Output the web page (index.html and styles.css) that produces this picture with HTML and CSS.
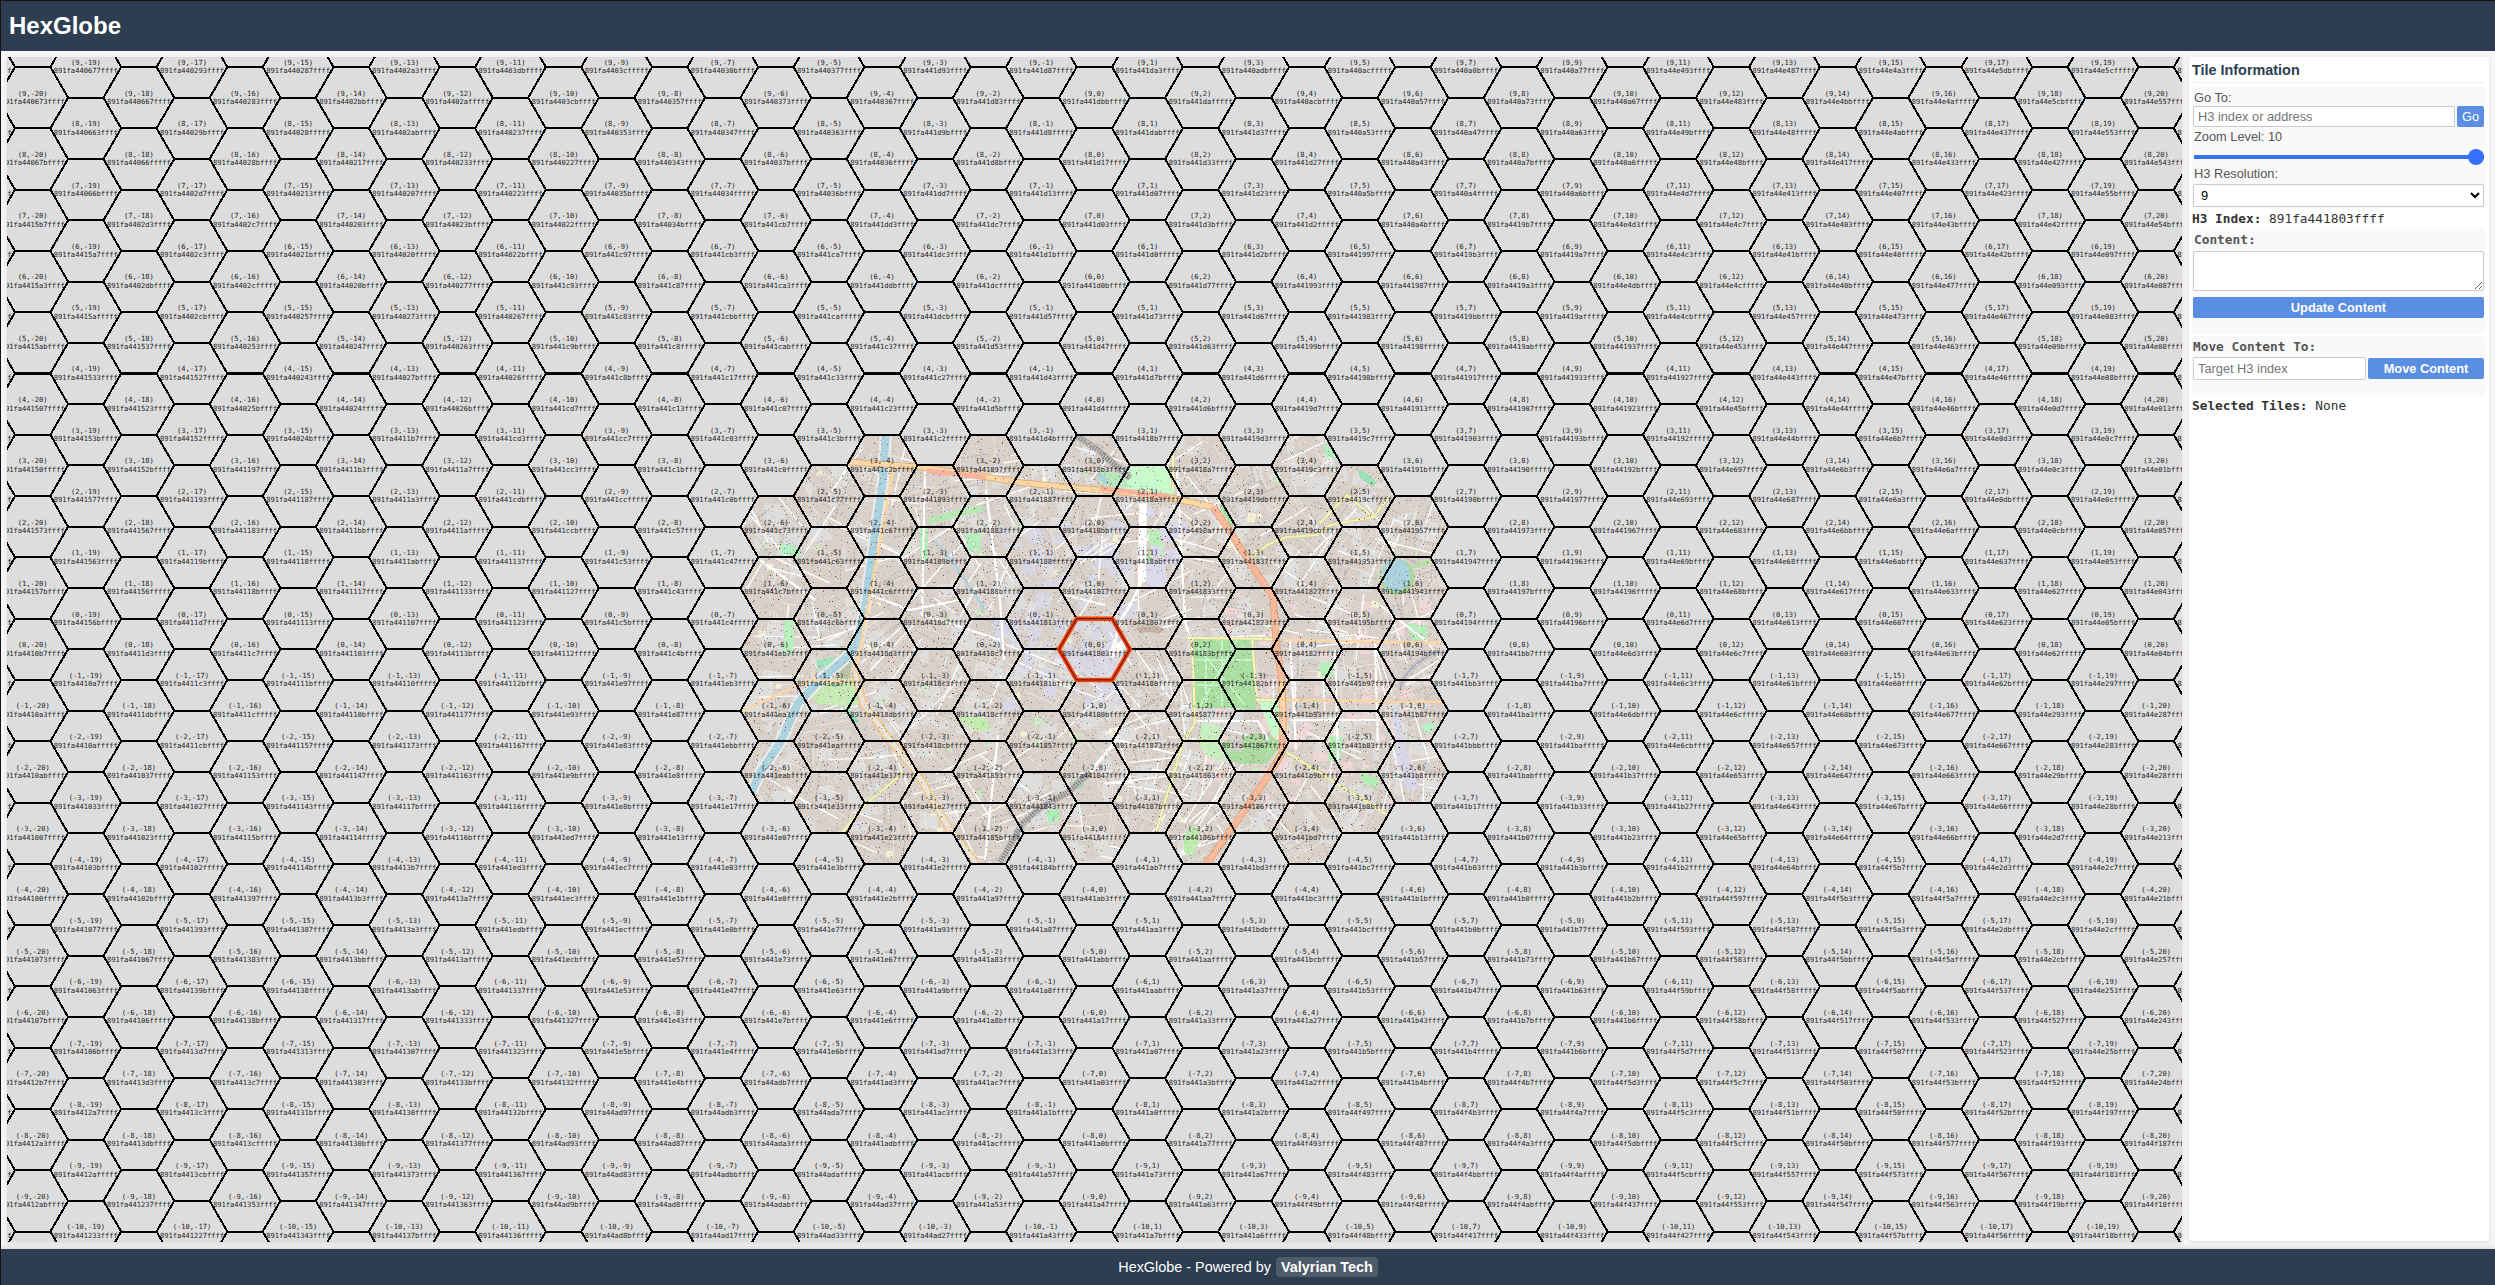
FILE: index.html
```html
<!DOCTYPE html>
<html lang="en">
<head>
<meta charset="utf-8">
<title>HexGlobe</title>
<link rel="stylesheet" href="styles.css">
</head>
<body>
<div class="app">
  <header class="app-header"><h1>HexGlobe</h1></header>
  <main class="app-main">
    <svg class="hex-map" id="map" viewBox="7 57 2175 1185"></svg>
    <aside class="panel">
      <h2>Tile Information</h2>
      <section class="group nav">
        <label for="goto">Go To:</label>
        <div class="row">
          <input id="goto" type="text" placeholder="H3 index or address">
          <button class="btn go">Go</button>
        </div>
        <label for="zoom">Zoom Level: 10</label>
        <input id="zoom" class="slider" type="range" min="1" max="10" value="10">
        <label for="res">H3 Resolution:</label>
        <select id="res"><option>9</option></select>
      </section>
      <p class="info"><strong>H3 Index:</strong> 891fa441803ffff</p>
      <section class="group content">
        <label class="mono" for="content">Content:</label>
        <textarea id="content"></textarea>
        <button class="btn wide">Update Content</button>
      </section>
      <section class="group move">
        <label class="mono" for="target">Move Content To:</label>
        <div class="row">
          <input id="target" type="text" placeholder="Target H3 index">
          <button class="btn move-btn">Move Content</button>
        </div>
      </section>
      <p class="info selected"><strong>Selected Tiles:</strong> None</p>
    </aside>
  </main>
  <footer class="app-footer">HexGlobe - Powered by <a class="brand">Valyrian Tech</a></footer>
</div>
<script src="map.js"></script>
</body>
</html>
```
FILE: styles.css
```css
* { box-sizing: border-box; }
body {
  margin: 0;
  height: 1285px;
  overflow: hidden;
  background: #f5f5f5;
  color: #333;
  font-family: "Liberation Sans", Arial, sans-serif;
}
.app {
  display: flex;
  flex-direction: column;
  height: 1285px;
  border-top: 1px solid #151515;
  border-left: 1px solid #151515;
}
.app-header {
  height: 50px;
  flex: none;
  display: flex;
  align-items: center;
  padding-left: 8px;
  background: #2c3e50;
  color: #fff;
}
.app-header h1 { margin: 0; font-size: 24px; line-height: 28px; }
.app-main {
  flex: 1;
  min-height: 0;
  display: flex;
  gap: 7px;
  padding: 6px 6px 7px;
}
.hex-map {
  width: 2175px;
  height: 1185px;
  flex: none;
  background: #ddd;
  box-shadow: 0 2px 4px rgba(0, 0, 0, .1);
}
.edge { fill: none; stroke: #000; stroke-width: 2; shape-rendering: crispEdges; }
.active-halo { fill: none; stroke: #f4430f; stroke-width: 4.5; }
.active-core { fill: none; stroke: #6b1c00; stroke-width: 1.2; }
.tile-label {
  font: 7.08px "DejaVu Sans Mono", monospace;
  fill: #222;
}
.panel {
  width: 300px;
  height: 1184px;
  padding: 3px 4px 3px 3px;
  background: #fff;
  border-radius: 4px;
  box-shadow: 0 1px 3px rgba(0, 0, 0, .12);
}
.panel h2 {
  margin: 0 0 4px;
  height: 23px;
  border-bottom: 1px solid #eee;
  font-size: 14.4px;
  line-height: 20px;
  color: #2c3e50;
}
.group {
  display: flex;
  flex-direction: column;
  padding: 0 1px 0 1px;
  border-radius: 3px;
  background: #f9f9f9;
}
.group label { padding-left: 1px; font-size: 12.8px; line-height: 15px; color: #555; }
.group .mono, .info { font-family: "DejaVu Sans Mono", monospace; }
.group .mono { font-weight: bold; }
.row { display: flex; gap: 2px; }
.nav { height: 121px; padding-top: 3px; }
.nav .row { margin: 1px 0 2px; }
input[type=text], select, textarea {
  margin: 0;
  border: 1px solid #ccc;
  border-radius: 2px;
  background: #fff;
  font: 12.8px "Liberation Sans", Arial, sans-serif;
}
input[type=text] { flex: 1; min-width: 0; height: 21px; padding: 0 4px; }
.btn {
  height: 21px;
  padding: 0;
  border: 0;
  border-radius: 2px;
  background: #5a8ee2;
  color: #fff;
  font: bold 12.8px "Liberation Sans", Arial, sans-serif;
}
.btn.go { width: 27px; font-weight: normal; }
.slider {
  appearance: none;
  width: 290px;
  height: 16px;
  margin: 5px 0 1px 1px;
  background: linear-gradient(#3670f5, #3670f5) center / 100% 4px no-repeat;
}
.slider::-webkit-slider-thumb {
  appearance: none;
  width: 16px;
  height: 16px;
  border-radius: 50%;
  background: #376fff;
}
.nav select { height: 23px; margin-top: 3px; padding: 0 3px; font-size: 12.8px; }
.info { margin: 0; height: 20px; font-size: 12.8px; line-height: 22px; }
.content { height: 106px; padding-top: 4px; margin-bottom: 2px; }
.content textarea { height: 40px; margin: 4px 0 6px; resize: vertical; }
.move { height: 59px; padding-top: 3px; }
.move label { padding-left: 0; }
.move .row { align-items: center; margin-top: 3px; }
.move input[type=text] { height: 23px; }
.move-btn { width: 116px; }
.selected { line-height: 21px; }
.app-footer {
  height: 36px;
  flex: none;
  display: flex;
  justify-content: center;
  align-items: center;
  gap: 5px;
  background: #2c3e50;
  color: #fff;
  font-size: 14.4px;
  box-shadow: 0 -2px 4px rgba(0, 0, 0, .1);
}
.brand {
  padding: 2px 5px;
  border-radius: 4px;
  background: #4d5b6a;
  font-weight: bold;
  line-height: 16px;
}
```
FILE: map.js
```js
// Tile codes, each drawn as 891fa44 + code + ffff. Two lists per row, 9 down to -10:
// odd columns (-19..19), then even columns (-20..20).
const rows = `
0677 0293 0287 02a3 03db 03cf 030b 0377 1d93 1d87 1da3 0adb 0acf 0a0b 0a77 e493 e487 e4a3 e5db e5cf
0673 0667 0283 02bb 02af 03cb 0357 0373 0367 1d83 1dbb 1daf 0acb 0a57 0a73 0a67 e483 e4bb e4af e5cb e557
0663 029b 028f 02ab 0237 0353 0347 0363 1d9b 1d8f 1dab 1d37 0a53 0a47 0a63 e49b e48f e4ab e437 e553
067b 066f 028b 0217 0233 0227 0343 037b 036f 1d8b 1d17 1d33 1d27 0a43 0a7b 0a6f e48b e417 e433 e427 e543
066b 02d7 0213 0207 0223 035b 034f 036b 1dd7 1d13 1d07 1d23 0a5b 0a4f 0a6b e4d7 e413 e407 e423 e55b
15b7 02d3 02c7 0203 023b 022f 034b 1cb7 1dd3 1dc7 1d03 1d3b 1d2f 0a4b 19b7 e4d3 e4c7 e403 e43b e42f e54b
15a7 02c3 021b 020f 022b 1c97 1cb3 1ca7 1dc3 1d1b 1d0f 1d2b 1997 19b3 19a7 e4c3 e41b e40f e42b e097
15a3 02db 02cf 020b 0277 1c93 1c87 1ca3 1ddb 1dcf 1d0b 1d77 1993 1987 19a3 e4db e4cf e40b e477 e093 e087
15af 02cb 0257 0273 0267 1c83 1cbb 1caf 1dcb 1d57 1d73 1d67 1983 19bb 19af e4cb e457 e473 e467 e083
15ab 1537 0253 0247 0263 1c9b 1c8f 1cab 1c37 1d53 1d47 1d63 199b 198f 19ab 1937 e453 e447 e463 e09b e08f
1533 1527 0243 027b 026f 1c8b 1c17 1c33 1c27 1d43 1d7b 1d6f 198b 1917 1933 1927 e443 e47b e46f e08b
1507 1523 025b 024f 026b 1cd7 1c13 1c07 1c23 1d5b 1d4f 1d6b 19d7 1913 1907 1923 e45b e44f e46b e0d7 e013
153b 152f 024b 11b7 1cd3 1cc7 1c03 1c3b 1c2f 1d4b 18b7 19d3 19c7 1903 193b 192f e44b e6b7 e0d3 e0c7
150f 152b 1197 11b3 11a7 1cc3 1c1b 1c0f 1c2b 1897 18b3 18a7 19c3 191b 190f 192b e697 e6b3 e6a7 e0c3 e01b
1577 1193 1187 11a3 1cdb 1ccf 1c0b 1c77 1893 1887 18a3 19db 19cf 190b 1977 e693 e687 e6a3 e0db e0cf
1573 1567 1183 11bb 11af 1ccb 1c57 1c73 1c67 1883 18bb 18af 19cb 1957 1973 1967 e683 e6bb e6af e0cb e057
1563 119b 118f 11ab 1137 1c53 1c47 1c63 189b 188f 18ab 1837 1953 1947 1963 e69b e68f e6ab e637 e053
157b 156f 118b 1117 1133 1127 1c43 1c7b 1c6f 188b 1817 1833 1827 1943 197b 196f e68b e617 e633 e627 e043
156b 11d7 1113 1107 1123 1c5b 1c4f 1c6b 18d7 1813 1807 1823 195b 194f 196b e6d7 e613 e607 e623 e05b
10b7 11d3 11c7 1103 113b 112f 1c4b 1eb7 18d3 18c7 1803 183b 182f 194b 1bb7 e6d3 e6c7 e603 e63b e62f e04b
10a7 11c3 111b 110f 112b 1e97 1eb3 1ea7 18c3 181b 180f 182b 1b97 1bb3 1ba7 e6c3 e61b e60f e62b e297
10a3 11db 11cf 110b 1177 1e93 1e87 1ea3 18db 18cf 180b 1877 1b93 1b87 1ba3 e6db e6cf e60b e677 e293 e287
10af 11cb 1157 1173 1167 1e83 1ebb 1eaf 18cb 1857 1873 1867 1b83 1bbb 1baf e6cb e657 e673 e667 e283
10ab 1037 1153 1147 1163 1e9b 1e8f 1eab 1e37 1853 1847 1863 1b9b 1b8f 1bab 1b37 e653 e647 e663 e29b e28f
1033 1027 1143 117b 116f 1e8b 1e17 1e33 1e27 1843 187b 186f 1b8b 1b17 1b33 1b27 e643 e67b e66f e28b
1007 1023 115b 114f 116b 1ed7 1e13 1e07 1e23 185b 184f 186b 1bd7 1b13 1b07 1b23 e65b e64f e66b e2d7 e213
103b 102f 114b 13b7 1ed3 1ec7 1e03 1e3b 1e2f 184b 1ab7 1bd3 1bc7 1b03 1b3b 1b2f e64b f5b7 e2d3 e2c7
100f 102b 1397 13b3 13a7 1ec3 1e1b 1e0f 1e2b 1a97 1ab3 1aa7 1bc3 1b1b 1b0f 1b2b f597 f5b3 f5a7 e2c3 e21b
1077 1393 1387 13a3 1edb 1ecf 1e0b 1e77 1a93 1a87 1aa3 1bdb 1bcf 1b0b 1b77 f593 f587 f5a3 e2db e2cf
1073 1067 1383 13bb 13af 1ecb 1e57 1e73 1e67 1a83 1abb 1aaf 1bcb 1b57 1b73 1b67 f583 f5bb f5af e2cb e257
1063 139b 138f 13ab 1337 1e53 1e47 1e63 1a9b 1a8f 1aab 1a37 1b53 1b47 1b63 f59b f58f f5ab f537 e253
107b 106f 138b 1317 1333 1327 1e43 1e7b 1e6f 1a8b 1a17 1a33 1a27 1b43 1b7b 1b6f f58b f517 f533 f527 e243
106b 13d7 1313 1307 1323 1e5b 1e4f 1e6b 1ad7 1a13 1a07 1a23 1b5b 1b4f 1b6b f5d7 f513 f507 f523 e25b
12b7 13d3 13c7 1303 133b 132f 1e4b adb7 1ad3 1ac7 1a03 1a3b 1a2f 1b4b f4b7 f5d3 f5c7 f503 f53b f52f e24b
12a7 13c3 131b 130f 132b ad97 adb3 ada7 1ac3 1a1b 1a0f 1a2b f497 f4b3 f4a7 f5c3 f51b f50f f52b f197
12a3 13db 13cf 130b 1377 ad93 ad87 ada3 1adb 1acf 1a0b 1a77 f493 f487 f4a3 f5db f5cf f50b f577 f193 f187
12af 13cb 1357 1373 1367 ad83 adbb adaf 1acb 1a57 1a73 1a67 f483 f4bb f4af f5cb f557 f573 f567 f183
12ab 1237 1353 1347 1363 ad9b ad8f adab ad37 1a53 1a47 1a63 f49b f48f f4ab f437 f553 f547 f563 f19b f18f
1233 1227 1343 137b 136f ad8b ad17 ad33 ad27 1a43 1a7b 1a6f f48b f417 f433 f427 f543 f57b f56f f18b
`.trim().split('\n').map(line => line.split(' '));

const R = 35.39, COL = 53.085, ROW = 61.29, X0 = 1094.4, Y0 = 649.3;
const cx = c => X0 + c * COL;
const cy = (r, c) => Y0 - r * ROW - (c % 2 ? ROW / 2 : 0);
const hex = (r, c) => {
  const x = cx(c), y = cy(r, c), h = ROW / 2;
  return 'M' + [[x + R, y], [x + R / 2, y + h], [x - R / 2, y + h], [x - R, y], [x - R / 2, y - h], [x + R / 2, y - h]]
    .map(p => p[0].toFixed(2) + ' ' + p[1].toFixed(2)).join('L') + 'Z';
};

// Street map under the loaded tiles
let seed = 7;
const rnd = () => (seed = (seed * 16807) % 2147483647) / 2147483647;
const between = (a, b) => a + rnd() * (b - a);
const stroke = (d, color, w, extra = '') => `<path d="${d}" fill="none" stroke="${color}" stroke-width="${w}" stroke-linejoin="round" ${extra}/>`;
const fill = (d, color) => `<path d="${d}" fill="${color}"/>`;

function blocks(n, color, min, max, x1 = 740, x2 = 1450, y1 = 430, y2 = 865) {
  let d = '';
  for (let i = 0; i < n; i++) {
    const x = between(x1, x2), y = between(y1, y2), w = between(min, max), h = between(min, max), s = between(-2, 2);
    d += `M${x.toFixed(1)} ${y.toFixed(1)}l${w.toFixed(1)} ${s.toFixed(1)}l${(-s).toFixed(1)} ${h.toFixed(1)}l${(-w).toFixed(1)} ${(-s).toFixed(1)}z`;
  }
  return fill(d, color);
}
function streets(n, color, width, min, max, extra) {
  let d = '';
  for (let i = 0; i < n; i++) {
    const x = between(740, 1450), y = between(430, 865);
    const a = Math.sin(x / 90) * .7 + Math.cos(y / 70) * .6 + (rnd() < .5 ? Math.PI / 2 : 0) + between(-.15, .15);
    const l = between(min, max);
    d += `M${x.toFixed(1)} ${y.toFixed(1)}l${(Math.cos(a) * l).toFixed(1)} ${(Math.sin(a) * l).toFixed(1)}`;
  }
  return stroke(d, color, width, extra);
}
function specks(n, color) {
  let d = '';
  for (let i = 0; i < n; i++) d += `M${Math.round(between(740, 1450))} ${Math.round(between(430, 865))}h1v1h-1z`;
  return `<path d="${d}" fill="${color}" shape-rendering="crispEdges"/>`;
}

const river = 'M886 430L883 480L875 533L865 607L857 643L847 657L817 683L798 703L780 743L760 773L750 795';
const westRoad = 'M855 673L863 703L890 740L917 773L950 830L980 868';
const northRoad = 'M848 462L920 467L987 477L1023 483L1110 491L1167 497L1213 507';
const eastRoad = 'M1213 507L1227 527L1250 563L1273 597L1277 650L1282 680L1283 733L1282 753L1270 773L1240 817L1205 866';
const rail = 'M1077 436L1098 450L1130 478M1000 862L1023 823L1040 808L1067 793L1090 772';
const sidings = 'M1400 690Q1402 668 1440 650';
const yellowRoads = 'M1253 557L1267 545L1287 537L1317 535L1330 525L1373 517L1390 496M1320 523L1347 495L1373 517M1192 638L1195 723L1183 743L1155 835M1252 638L1257 700H1280M1187 638L1277 639M1283 750L1387 815M903 773L867 803L842 832M1173 430V490';

const city =
  `<rect x="735" y="425" width="720" height="445" fill="#d9d0c9"/>` +
  blocks(420, '#dedddb', 6, 20) +
  blocks(70, '#d8d7e5', 6, 18, 990, 1120, 520, 700) +
  blocks(80, '#efd6d6', 5, 14, 1190, 1440, 600, 800) +
  blocks(45, '#c9e8bd', 3, 9) + blocks(40, '#f3f0d4', 4, 9) +
  streets(900, '#ebe8e4', .9, 10, 35) +
  streets(300, '#7d7772', .5, 12, 45, 'stroke-dasharray="2 2"') +
  streets(230, '#fff', 1.3, 25, 75) +
  fill('M1192 638H1253L1256 712L1240 708L1192 708Z', '#a9dfa0') +
  stroke('M1206 640V706M1237 640L1200 706M1222 640V706M1196 660H1254M1196 685H1254M1196 645L1245 705', '#c8facc', 1.6) +
  fill('M1221 742L1240 738L1255 733L1275 738L1282 745L1266 764L1240 764L1226 758Z', '#addaa1') +
  fill('M1203 722L1222 727L1218 745L1226 762L1206 756L1198 742Z', '#c8efc0') +
  fill('M1232 738L1243 736L1242 752L1230 750Z', '#d3cfc8') +
  fill('M1258 700H1280L1284 733L1272 736Z', '#c8facc') +
  fill('M1129 467L1168 466L1175 476L1173 495L1117 490Z', '#c8facc') +
  fill('M1100 470L1121 474L1130 487L1100 488Z', '#b5e9bd') +
  stroke('M1098 474L1108 484', '#aad3df', 5) +
  fill('M1148 530L1163 530L1163 556L1152 557Z', '#b9eebb') +
  stroke('M1150 548V584M1221 505L1233 526', '#a6dca0', 4) +
  blocks(16, '#dadaec', 8, 16, 1143, 1172, 503, 580) +
  fill('M817 680L857 678L863 700L855 706L818 704L808 694Z', '#c5ebb4') +
  fill('M816 660L836 656L830 668L818 670Z', '#9ee3bc') +
  fill('M840 645L852 656L850 678L838 678Z', '#bcc2a5') +
  fill('M842 707L850 710L860 722L852 722Z', '#8fdcb4') +
  fill('M785 620L795 622L793 655L782 652Z', '#baf0c0') +
  fill('M781 543L800 548V557L780 553Z', '#b1f0be') +
  fill('M965 534L980 532L981 550L968 552Z', '#b5efbc') +
  fill('M920 526L928 528L928 562L920 558Z', '#b5e9b8') +
  fill('M928 518L960 509L982 505L984 511L960 517L930 524Z', '#b7e8b3') +
  fill('M960 716L985 718L992 728L980 732L963 724Z', '#c0ecae') +
  fill('M1184 838Q1188 824 1199 828Q1200 845 1192 857L1184 852Z', '#bdebae') +
  fill('M1324 442L1334 452L1335 460L1325 455Z', '#b1ecbd') +
  fill('M1358 470L1364 472L1377 482L1373 487L1360 478Z', '#98dfb4') +
  fill('M1319 663L1334 662V675L1322 678Z', '#b5eeb5') +
  fill('M1330 735L1343 738L1340 762L1328 760Z', '#b5eeb5') +
  fill('M1360 773L1378 778V788L1364 784Z', '#b5eeb5') +
  fill('M1420 725L1438 722L1428 735Z', '#b5f2c5') +
  fill('M1406 623L1428 626L1426 640L1412 640Z', '#b5eebb') +
  fill('M1045 812L1058 808L1060 818L1050 824Z', '#a9efb5') +
  fill('M1073 783L1082 775L1084 786L1076 790Z', '#8edcb4') +
  fill('M1136 628Q1150 622 1165 629L1160 634Q1148 630 1140 634Z', '#c5b3a5') +
  `<ellipse cx="1397" cy="577" rx="17" ry="18" fill="#a8d89b"/><ellipse cx="1396" cy="575" rx="14" ry="16" fill="#aad3df"/>` +
  stroke('M1413 567L1431 561', '#b1e3a3', 4) +
  fill('M1392 710L1400 705L1404 740L1420 790L1406 790L1398 760Z', '#d7d7e8') +
  stroke(rail, '#bdbbba', 7) + stroke(rail, '#7e7c7b', 5, 'stroke-dasharray="1 1.8"') +
  stroke(sidings, '#c9c7cc', 6) + stroke(sidings, '#8f8d90', .8) +
  stroke('M1143 503L1142 582M1128 640L1110 655', '#fff', 8) +
  stroke('M1142 580L1133 600L1122 618L1112 650M1090 772L1120 736', '#fff', 3) +
  stroke('M1177 470L1185 620L1190 640M1118 740L1180 755M1195 721H1258L1268 740M986 490L1000 600L1004 660M998 735L985 860M925 470L922 615L940 620L1000 640M1290 640L1296 750M1335 650L1338 760M1375 640L1378 750M1290 720H1380M1380 605L1425 640M1065 595L1105 605M760 560L815 600M870 595L910 610L960 600', '#fff', 2.2) +
  stroke('M935 540L955 565L985 610', '#aad3df', 2.5) +
  stroke(river, '#eeeceb', 12) + stroke(river, '#aad3df', 8) +
  stroke(yellowRoads, '#c9c98c', 3.2) + stroke(yellowRoads, '#f4f6b8', 2.2) +
  stroke('M1283 640L1443 643M1283 700L1443 702M740 712L810 680L857 682', '#fcd6a4', 2.4) +
  stroke('M893 470L878 553L863 633L855 673', '#fcd6a4', 3) +
  stroke(westRoad, '#f5c78b', 8) + stroke(westRoad, '#e8e6dc', 4.5) +
  stroke(northRoad, '#d9a869', 6.4) + stroke(northRoad, '#fcd6a4', 5.2) +
  stroke('M927 471L985 477M1100 488L1170 497', '#f9b29c', 5) +
  stroke(eastRoad, '#e3a878', 7.4) + stroke(eastRoad, '#f7b89c', 5.6) +
  stroke('M1282 680L1283 735', '#fcd6a4', 5) +
  specks(5500, '#bdb1a8') + specks(4500, '#efebe7') + specks(2400, '#8e8681') +
  specks(420, '#734a08') + specks(380, '#3b8fe0') + specks(260, '#ac39ac') + specks(190, '#c9201c') + specks(240, '#4a9a50');

const loaded = (r, c) => c % 2 ? Math.abs(c) <= 5 && r <= 2 && r >= -3 : Math.abs(c) <= 6 && Math.abs(r) <= (Math.abs(c) === 6 ? 2 : 3);

let edges = '', clip = '', labels = '';
for (let r = 10; r >= -10; r--) {
  for (let c = -21; c <= 21; c++) {
    edges += hex(r, c);
    if (loaded(r, c)) clip += hex(r, c);
  }
}
const label = (x, y, text, anchor = 'middle') => `<text x="${x.toFixed(1)}" y="${y}" text-anchor="${anchor}">${text}</text>`;
rows.forEach((codes, i) => {
  const r = 9 - (i >> 1), odd = i % 2 === 0;
  codes.forEach((code, k) => {
    const c = (odd ? -19 : -20) + 2 * k, y = cy(r, c);
    labels += label(cx(c), Math.round(y - 2.1), `(${r},${c})`) + label(cx(c), Math.round(y + 6.4), `891fa44${code}ffff`);
  });
  if (odd) {
    const y = Math.round(cy(r, 1) + 6.4);
    labels += label(11.6, y, 'f', 'end') + label(2177.4, y, '8', 'start');
  }
});

document.getElementById('map').innerHTML =
  `<clipPath id="loaded"><path d="${clip}"/></clipPath>` +
  `<g clip-path="url(#loaded)">${city}</g>` +
  `<path class="edge" d="${edges}"/>` +
  `<path class="active-halo" d="${hex(0, 0)}"/><path class="active-core" d="${hex(0, 0)}"/>` +
  `<g class="tile-label">${labels}</g>`;
```
